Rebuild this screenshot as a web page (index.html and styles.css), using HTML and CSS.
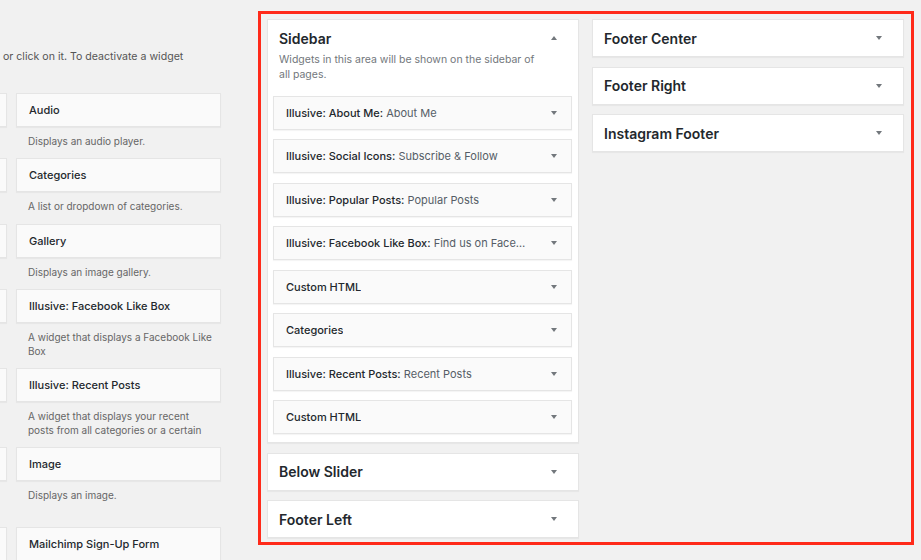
FILE: index.html
```html
<!DOCTYPE html>
<html lang="en">
<head>
    <meta charset="UTF-8">
    <title>Widgets</title>
    <meta name="viewport" content="width=device-width, initial-scale=1">
    <link rel="stylesheet" href="styles.css">
</head>

<body>
<div class="page">
    <div class="available">
        <p class="intro">or click on it. To deactivate a widget</p>
        <div class="widget-grid">
            <div class="widget-item">
                <div class="widget-box"></div>
                <div class="widget-desc"></div>
            </div>
            <div class="widget-item">
                <div class="widget-box"><span>Audio</span></div>
                <div class="widget-desc">Displays an audio player.</div>
            </div>
            <div class="widget-item">
                <div class="widget-box"></div>
                <div class="widget-desc"></div>
            </div>
            <div class="widget-item">
                <div class="widget-box"><span>Categories</span></div>
                <div class="widget-desc">A list or dropdown of categories.</div>
            </div>
            <div class="widget-item">
                <div class="widget-box"></div>
                <div class="widget-desc"></div>
            </div>
            <div class="widget-item">
                <div class="widget-box"><span>Gallery</span></div>
                <div class="widget-desc">Displays an image gallery.</div>
            </div>
            <div class="widget-item">
                <div class="widget-box"></div>
                <div class="widget-desc"></div>
            </div>
            <div class="widget-item">
                <div class="widget-box"><span>Illusive: Facebook Like Box</span></div>
                <div class="widget-desc">A widget that displays a Facebook Like Box</div>
            </div>
            <div class="widget-item">
                <div class="widget-box"></div>
                <div class="widget-desc"></div>
            </div>
            <div class="widget-item">
                <div class="widget-box"><span>Illusive: Recent Posts</span></div>
                <div class="widget-desc">A widget that displays your recent posts from all categories or a certain category</div>
            </div>
            <div class="widget-item">
                <div class="widget-box"></div>
                <div class="widget-desc two-line"></div>
            </div>
            <div class="widget-item">
                <div class="widget-box"><span>Image</span></div>
                <div class="widget-desc">Displays an image.</div>
            </div>
            <div class="widget-item">
                <div class="widget-box"></div>
                <div class="widget-desc"></div>
            </div>
            <div class="widget-item">
                <div class="widget-box"><span>Mailchimp Sign-Up Form</span></div>
                <div class="widget-desc"></div>
            </div>
        </div>
    </div>

    <div class="areas">
        <div class="area-col">
            <div class="area open">
                <div class="area-head">
                    <h2>Sidebar</h2>
                    <span class="arrow up"></span>
                </div>
                <p class="area-desc">Widgets in this area will be shown on the sidebar of all pages.</p>
                <div class="area-widgets">
                    <div class="widget"><h3>Illusive: About Me:<span class="in-title"> About Me</span></h3><span class="arrow"></span></div>
                    <div class="widget"><h3>Illusive: Social Icons:<span class="in-title"> Subscribe &amp; Follow</span></h3><span class="arrow"></span></div>
                    <div class="widget"><h3>Illusive: Popular Posts:<span class="in-title"> Popular Posts</span></h3><span class="arrow"></span></div>
                    <div class="widget"><h3>Illusive: Facebook Like Box:<span class="in-title"> Find us on Face…</span></h3><span class="arrow"></span></div>
                    <div class="widget"><h3>Custom HTML</h3><span class="arrow"></span></div>
                    <div class="widget"><h3>Categories</h3><span class="arrow"></span></div>
                    <div class="widget"><h3>Illusive: Recent Posts:<span class="in-title"> Recent Posts</span></h3><span class="arrow"></span></div>
                    <div class="widget"><h3>Custom HTML</h3><span class="arrow"></span></div>
                </div>
            </div>
            <div class="area">
                <div class="area-head"><h2>Below Slider</h2><span class="arrow"></span></div>
            </div>
            <div class="area">
                <div class="area-head"><h2>Footer Left</h2><span class="arrow"></span></div>
            </div>
        </div>
        <div class="area-col">
            <div class="area">
                <div class="area-head"><h2>Footer Center</h2><span class="arrow"></span></div>
            </div>
            <div class="area">
                <div class="area-head"><h2>Footer Right</h2><span class="arrow"></span></div>
            </div>
            <div class="area">
                <div class="area-head"><h2>Instagram Footer</h2><span class="arrow"></span></div>
            </div>
        </div>
    </div>
</div>
</body>
</html>
```

FILE: styles.css
```css
html, body {
    margin: 0;
    padding: 0;
}
body {
    background-color: #f1f1f1;
    color: #23282d;
    font-family: Inter, "Noto Sans", sans-serif;
    overflow: hidden;
}
.page {
    display: flex;
    flex-direction: row;
    align-items: flex-start;
}
.available {
    width: 258px;
    height: 560px;
    flex-shrink: 0;
    overflow: hidden;
}
.intro {
    margin: 50px 0 0 3px;
    font-size: 10.6px;
    line-height: 14px;
    color: #555;
    white-space: nowrap;
}
.widget-grid {
    margin: 29px 0 0 -198px;
    display: grid;
    grid-template-columns: 205px 205px;
    column-gap: 9px;
}
.widget-box {
    box-sizing: border-box;
    height: 34px;
    padding: 0 12px;
    display: flex;
    align-items: center;
    background-color: #fafafa;
    border: 1px solid #e5e5e5;
    box-shadow: 0 1px 1px rgba(0, 0, 0, 0.04);
    font-size: 11px;
    font-weight: 500;
}
.widget-desc {
    box-sizing: border-box;
    padding: 7px 6px 0 12px;
    margin-bottom: 10.3px;
    min-height: 21px;
    max-height: 35px;
    overflow: hidden;
    font-size: 10px;
    line-height: 14px;
    color: #666;
}
.widget-desc.two-line {
    min-height: 35px;
}
.areas {
    box-sizing: border-box;
    width: 656px;
    height: 534px;
    margin-top: 11px;
    padding: 5px 7px 0 6px;
    border: 3px solid #ff2a1a;
    display: flex;
    flex-direction: row;
    gap: 13px;
}
.area-col {
    width: 312px;
    display: flex;
    flex-direction: column;
    gap: 9.5px;
}
.area {
    background-color: #fff;
    border: 1px solid #e5e5e5;
    box-shadow: 0 1px 1px rgba(0, 0, 0, 0.04);
}
.area-head {
    height: 36px;
    padding: 0 21px 0 11px;
    display: flex;
    align-items: center;
    justify-content: space-between;
}
.area-head h2 {
    margin: 0;
    font-size: 14px;
    font-weight: 600;
}
.area.open .area-head {
    height: 18px;
    padding-top: 9px;
}
.area-desc {
    margin: 5px 0 14px 0;
    padding: 0 40px 0 11px;
    font-size: 10.5px;
    line-height: 15px;
    color: #72777c;
}
.area-widgets {
    padding: 0 6px 8px 5px;
    display: flex;
    flex-direction: column;
    gap: 9.45px;
}
.widget {
    box-sizing: border-box;
    height: 34px;
    padding: 0 14px 0 12px;
    display: flex;
    align-items: center;
    justify-content: space-between;
    background-color: #fafafa;
    border: 1px solid #e5e5e5;
    box-shadow: 0 1px 1px rgba(0, 0, 0, 0.04);
}
.widget h3 {
    margin: 0;
    font-size: 11px;
    font-weight: 500;
    white-space: nowrap;
    overflow: hidden;
    text-overflow: ellipsis;
}
.in-title {
    font-weight: 400;
    color: #555d66;
}
.arrow {
    width: 0;
    height: 0;
    border-left: 3.5px solid transparent;
    border-right: 3.5px solid transparent;
    border-top: 4px solid #72777c;
}
.arrow.up {
    border-top: none;
    border-bottom: 4px solid #72777c;
}
```
